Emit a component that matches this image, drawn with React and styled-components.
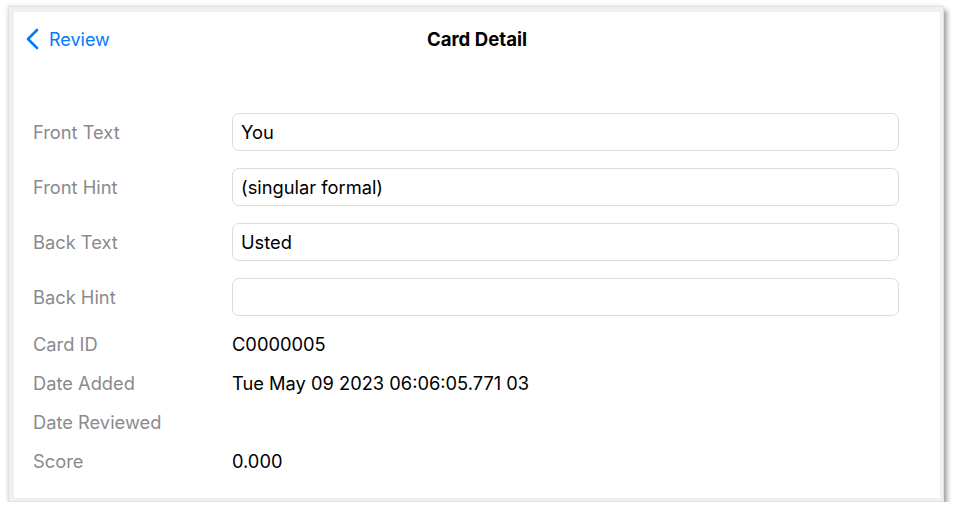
import React from 'react';
import styled, { createGlobalStyle } from 'styled-components';

const GlobalStyle = createGlobalStyle`
  html, body {
    margin: 0;
    padding: 0;
    background: #ffffff;
  }
  body {
    font-family: 'Inter', 'Liberation Sans', sans-serif;
    -webkit-font-smoothing: antialiased;
  }
`;

// the ipad-ish frame around the screen
const Device = styled.div`
  margin: 6px 0 0 8px;
  width: 936px;
  height: 496px;
  box-sizing: border-box;
  padding: 5px 3px 3px 5px;
  background: #edf2f1;
  border: 1px solid #dfe3e2;
  box-shadow: 3px 4px 5px rgba(0, 0, 0, 0.38), -1px -1px 4px rgba(0, 0, 0, 0.08);
`;

const Screen = styled.div`
  background: #ffffff;
  height: 100%;
  display: flex;
  flex-direction: column;
`;

const NavBar = styled.div`
  height: 54px;
  display: flex;
  align-items: center;
  position: relative;
  padding-left: 11px;
`;

const BackButton = styled.div`
  display: flex;
  align-items: center;
  gap: 10px;
  color: #007aff;
  font-size: 18px;
  cursor: pointer;
`;

const Title = styled.div`
  position: absolute;
  left: 0;
  right: 0;
  text-align: center;
  font-size: 18.6px;
  font-weight: 700;
  color: #000;
  pointer-events: none;
`;

const Form = styled.div`
  padding: 38px 41px 0 19px;
`;

const Row = styled.div`
  display: grid;
  grid-template-columns: 199px 1fr;
  align-items: center;
  height: ${p => p.$h}px;
`;

const Label = styled.div`
  font-size: 18.3px;
  color: #8a8a8e;
`;

const Value = styled.div`
  font-size: 18.3px;
  color: #000;
`;

const Field = styled.input`
  height: 38px;
  box-sizing: border-box;
  border: 1px solid #dcdcdc;
  border-radius: 7px;
  padding: 0 8px;
  font-family: inherit;
  font-size: 18.3px;
  color: #000;
  background: #fff;
  outline: none;
`;

const Chevron = () => (
  <svg width="14" height="22" viewBox="0 0 14 22">
    <path d="M12 2 L3 11 L12 20" fill="none" stroke="#007aff" strokeWidth="2.6" strokeLinecap="round" strokeLinejoin="round" />
  </svg>
);

const fields = [
  ['Front Text', 'You'],
  ['Front Hint', '(singular formal)'],
  ['Back Text', 'Usted'],
  ['Back Hint', ''],
];

const info = [
  ['Card ID', 'C0000005'],
  ['Date Added', 'Tue May 09 2023 06:06:05.771 03'],
  ['Date Reviewed', ''],
  ['Score', '0.000'],
];

export default function App() {
  return (
    <>
      <GlobalStyle />
      <Device>
        <Screen>
          <NavBar>
            <BackButton>
              <Chevron />
              Review
            </BackButton>
            <Title>Card Detail</Title>
          </NavBar>
          <Form>
            {fields.map(([label, value]) => (
              <Row key={label} $h={55}>
                <Label>{label}</Label>
                <Field defaultValue={value} />
              </Row>
            ))}
            {info.map(([label, value]) => (
              <Row key={label} $h={39}>
                <Label>{label}</Label>
                <Value>{value}</Value>
              </Row>
            ))}
          </Form>
        </Screen>
      </Device>
    </>
  );
}
